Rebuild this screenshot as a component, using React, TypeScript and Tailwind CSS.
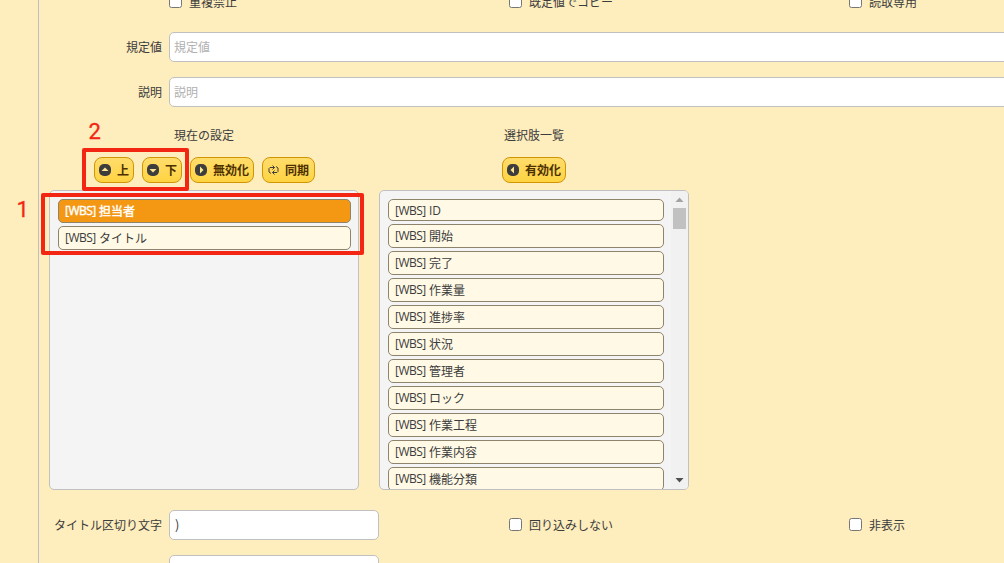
import type { ReactNode } from 'react';
import { clsx } from 'clsx';

type IconName = 'up' | 'down' | 'right' | 'left' | 'sync';

const currentItems = ['担当者', 'タイトル'];

const sourceItems = [
  'ID',
  '開始',
  '完了',
  '作業量',
  '進捗率',
  '状況',
  '管理者',
  'ロック',
  '作業工程',
  '作業内容',
  '機能分類',
];

const triangles = {
  up: 'M2.5 7L6 3.5L9.5 7Z',
  down: 'M2.5 5H9.5L6 8.5Z',
  right: 'M5 2.5L8.5 6L5 9.5Z',
  left: 'M7 2.5V9.5L3.5 6Z',
};

function Icon({ name }: { name: IconName }) {
  if (name === 'sync') {
    return (
      <svg className="h-3 w-3" viewBox="0 0 12 12" fill="none" stroke="#3d3d3d">
        <path d="M4 9.5L2 8V4.5L3 3.5H7.5M5.5 1.5L7.5 3.5L5.5 5.5" />
        <path d="M9 2.5L11 4V7.5L10 8.5H5.5M7.5 6.5L5.5 8.5L7.5 10.5" />
      </svg>
    );
  }

  return (
    <svg className="h-3 w-3" viewBox="0 0 12 12">
      <rect width="12" height="12" rx="5" fill="#3d3d3d" />
      <path d={triangles[name]} fill="#ffe88f" />
    </svg>
  );
}

function Button({ icon, children }: { icon: IconName; children: ReactNode }) {
  return (
    <button
      className={clsx(
        'flex h-[26px] items-center gap-[6px] rounded-[8px] border border-[#d19405] bg-linear-to-b from-[#ffdd6b] to-[#ffd340] pl-1 font-bold whitespace-nowrap text-[#4c3000]',
        icon === 'sync' ? 'pr-[5px]' : 'pr-1'
      )}
    >
      <Icon name={icon} />
      <span>{children}</span>
    </button>
  );
}

function Check({ label }: { label: string }) {
  return (
    <label className="flex w-[340px] shrink-0 items-center gap-[7px]">
      <input
        type="checkbox"
        className="-mt-px h-[13px] w-[13px] appearance-none rounded-[2.5px] border border-[#767676] bg-white"
      />
      {label}
    </label>
  );
}

function Label({ children }: { children?: ReactNode }) {
  return <div className="w-[130px] shrink-0 pr-[7px] text-right">{children}</div>;
}

function Item({ name, selected, short }: { name: string; selected?: boolean; short?: boolean }) {
  return (
    <li
      className={clsx(
        'flex shrink-0 items-center gap-[3px] rounded-[5px] border border-[#8e846b] pl-[6px]',
        short ? "h-[22px] pt-px font-['Open_Sans']" : 'h-6',
        selected
          ? 'bg-[#f49814] text-white [-webkit-text-stroke:0.4px_white]'
          : 'bg-[#fff9e5]'
      )}
    >
      <span className="w-[31px] font-['Open_Sans'] text-[12px] tracking-[-0.5px]">[WBS]</span>
      <span>{name}</span>
    </li>
  );
}

export default function App() {
  return (
    <div className="relative flex h-[563px] w-[1004px] overflow-hidden bg-[#feedbd] font-['Noto_Sans_CJK_JP',sans-serif] text-[12px] leading-[18px] text-[#3c3c3c]">
      <div className="w-[39px] shrink-0 border-r border-[#c0c0c0]" />

      <main className="flex min-w-0 flex-1 flex-col">
        {/* Checkbox row */}
        <div className="-mt-[13px] flex h-[30px] shrink-0 items-center">
          <Label />
          <Check label="重複禁止" />
          <Check label="既定値でコピー" />
          <Check label="読取専用" />
        </div>

        {/* Text fields */}
        <div className="mt-[15px] flex h-[30px] shrink-0 items-center">
          <Label>規定値</Label>
          <input
            placeholder="規定値"
            className="h-[30px] w-[900px] shrink-0 rounded-[5px] border border-[#c0c0c0] bg-white px-1 pb-px placeholder:text-[#b0b0b0]"
          />
        </div>
        <div className="mt-[15px] flex h-[30px] shrink-0 items-center">
          <Label>説明</Label>
          <input
            placeholder="説明"
            className="h-[30px] w-[900px] shrink-0 rounded-[5px] border border-[#c0c0c0] bg-white px-1 pb-px placeholder:text-[#b0b0b0]"
          />
        </div>

        {/* Selectable lists */}
        <div className="mt-[19px] ml-[10px] flex shrink-0 gap-5">
          <section className="w-[310px]">
            <h2 className="pl-[125px]">現在の設定</h2>
            <div className="mt-[13px] ml-[45px] flex gap-2">
              <Button icon="up">上</Button>
              <Button icon="down">下</Button>
              <Button icon="right">無効化</Button>
              <Button icon="sync">同期</Button>
            </div>
            <ul className="mt-[7px] flex h-[300px] flex-col gap-[3px] rounded-[5px] border border-[#c0c0c0] bg-[#f4f4f4] py-2 pr-[7px] pl-2">
              {currentItems.map((name, i) => (
                <Item key={name} name={name} selected={i === 0} />
              ))}
            </ul>
          </section>

          <section className="w-[310px]">
            <h2 className="pl-[125px]">選択肢一覧</h2>
            <div className="mt-[13px] ml-[123px] flex">
              <Button icon="left">有効化</Button>
            </div>
            <div className="mt-[7px] flex h-[300px] overflow-hidden rounded-[5px] border border-[#c0c0c0] bg-[#f4f4f4]">
              <ul className="flex flex-1 flex-col gap-[3px] overflow-hidden py-2 pr-[7px] pl-2">
                {sourceItems.map((name, i) => (
                  <Item key={name} name={name} short={i === 0} />
                ))}
              </ul>
              {/* Scrollbar */}
              <div className="flex w-[17px] flex-col items-center bg-[#f1f1f1]">
                <svg className="h-[17px] w-[17px]" viewBox="0 0 17 17">
                  <path d="M4.5 11L8.5 6.5L12.5 11Z" fill="#a3a3a3" />
                </svg>
                <div className="h-[21px] w-[13px] bg-[#c1c1c1]" />
                <svg className="mt-auto h-[17px] w-[17px]" viewBox="0 0 17 17">
                  <path d="M4.5 6L8.5 10.5L12.5 6Z" fill="#505050" />
                </svg>
              </div>
            </div>
          </section>
        </div>

        <div className="mt-5 flex h-[30px] shrink-0 items-center">
          <Label>タイトル区切り文字</Label>
          <div className="w-[340px] shrink-0">
            <input
              defaultValue=")"
              className="block h-[30px] w-[210px] rounded-[5px] border border-[#c0c0c0] bg-white px-[5px] pb-0.5 text-[13px]"
            />
          </div>
          <Check label="回り込みしない" />
          <Check label="非表示" />
        </div>
        <div className="mt-[15px] flex h-[30px] shrink-0">
          <Label />
          <input className="h-[30px] w-[210px] rounded-[5px] border border-[#c0c0c0] bg-white" />
        </div>
      </main>

      {/* Step markers */}
      <div className="absolute top-[148px] left-[82px] h-[43px] w-[107px] rounded-[2px] border-4 border-[#f32613]" />
      <div className="absolute top-[193px] left-[41px] h-[62px] w-[323px] rounded-[2px] border-4 border-[#f32613]" />
      <span className="absolute top-[120px] left-[88.5px] font-['Roboto'] text-[22px] leading-6 text-[#f32613] [-webkit-text-stroke:0.3px_#f32613]">2</span>
      <span className="absolute top-[198px] left-[16.5px] font-['Roboto'] text-[22px] leading-6 text-[#f32613] [-webkit-text-stroke:0.3px_#f32613]">1</span>
    </div>
  );
}
